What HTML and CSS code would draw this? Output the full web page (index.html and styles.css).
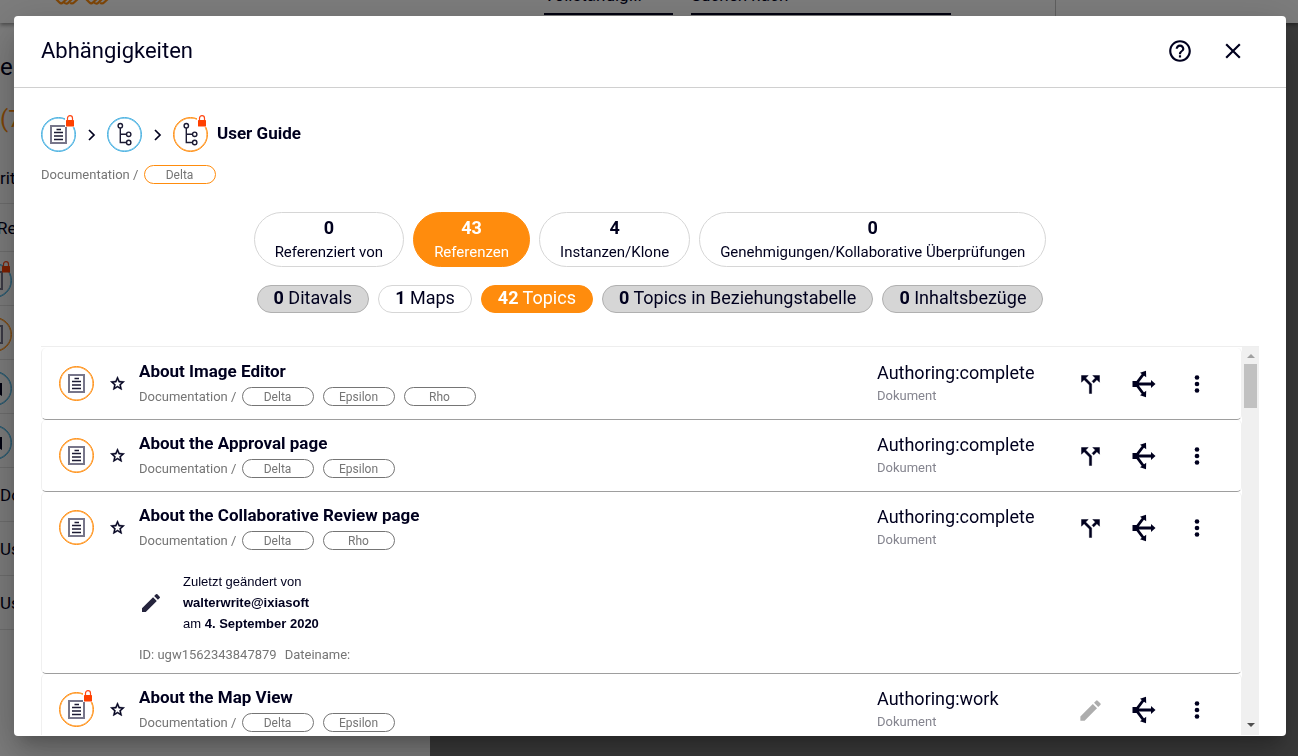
FILE: index.html
```
<!DOCTYPE html>
<html lang="de">
<head>
<meta charset="utf-8">
<title>Abhängigkeiten</title>
<link rel="stylesheet" href="styles.css">
</head>
<body>
<svg class="defs" aria-hidden="true">
  <symbol id="doc" viewBox="0 0 33 33">
    <path d="M9 8H24V25H9z" fill="none" stroke="#77768a" stroke-width="2"/>
    <path d="M14.500 11.500h4.500M12 14.500h9M12 18h9M12 21.500h9" fill="none" stroke="#1b1a33" stroke-width="1.400"/>
  </symbol>
  <symbol id="tree" viewBox="0 0 33 33">
    <g fill="none" stroke="#1b1a33" stroke-width="1.400">
      <circle cx="12.300" cy="7.700" r="2.200"/><circle cx="20.700" cy="16.300" r="2.200"/><circle cx="20.700" cy="24.500" r="2.200"/>
      <path d="M12.300 9.900V24.500H18.500M12.300 16.300H18.500"/>
    </g>
  </symbol>
  <symbol id="flag" viewBox="0 0 33 33"><path d="M11 11h13v13l-6.500-4-6.500 4z" fill="#00001e"/></symbol>
  <symbol id="lock" viewBox="0 0 10 12">
    <path d="M2.500 6V3.200a2.500 2.500 0 0 1 5 0V6" fill="none" stroke="#ff4713" stroke-width="1.200"/>
    <rect x="1" y="5" width="8" height="6.500" rx=".6" fill="#ff4000"/>
  </symbol>
  <symbol id="star" viewBox="0 0 24 24"><path fill="#00001e" stroke="#00001e" stroke-width=".6" d="M22 9.240l-7.190-.62L12 2 9.190 8.630 2 9.240l5.460 4.730L5.820 21 12 17.270 18.180 21l-1.630-7.030L22 9.240zM12 15.400l-3.760 2.270 1-4.280-3.320-2.880 4.380-.38L12 6.100l1.710 4.040 4.380.38-3.320 2.880 1 4.280L12 15.400z"/></symbol>
  <symbol id="split" viewBox="0 0 24 24"><path d="M14 4l2.290 2.290-2.880 2.880 1.420 1.420 2.880-2.880L20 10V4zM10 4H4v6l2.290-2.290 4.710 4.700V20h2v-8.410l-5.290-5.300z" stroke="#00001e" stroke-width=".4"/></symbol>
  <symbol id="fan" viewBox="0 0 26 28">
    <path d="M5 14L12.500 4M5 14h15M5 14l7.500 10" fill="none" stroke="#00001e" stroke-width="2.900"/>
    <path d="M1.500 11h5v6h-5zM20 10l4.500 4-4.500 4zM9 2.800l6-2 .2 6.400-2.400-1.700zM9 25.200l6 2 .2-6.400-2.400 1.700z"/>
  </symbol>
  <symbol id="dots" viewBox="0 0 24 24"><circle cx="12" cy="5.500" r="2.300"/><circle cx="12" cy="12" r="2.300"/><circle cx="12" cy="18.500" r="2.300"/></symbol>
  <symbol id="pencil" viewBox="0 0 24 24"><path d="M3 17.250V21h3.750L17.810 9.940l-3.750-3.750L3 17.250zM20.710 7.040a1 1 0 0 0 0-1.410l-2.340-2.340a1 1 0 0 0-1.410 0l-1.830 1.830 3.750 3.750 1.830-1.830z"/></symbol>
  <symbol id="help" viewBox="0 0 24 24"><path d="M11 18h2v-2h-2v2zm1-16C6.480 2 2 6.480 2 12s4.480 10 10 10 10-4.480 10-10S17.520 2 12 2zm0 18c-4.410 0-8-3.590-8-8s3.590-8 8-8 8 3.590 8 8-3.590 8-8 8zm0-14c-2.210 0-4 1.790-4 4h2c0-1.100.9-2 2-2s2 .9 2 2c0 2-3 1.750-3 5h2c0-2.250 3-2.500 3-5 0-2.210-1.790-4-4-4z"/></symbol>
  <symbol id="close" viewBox="0 0 24 24"><path d="M19 6.410L17.590 5 12 10.590 6.410 5 5 6.410 10.590 12 5 17.590 6.410 19 12 13.410 17.590 19 19 17.590 13.410 12z"/></symbol>
  <symbol id="chevron" viewBox="0 0 10 14"><path d="M2 2l5 5-5 5" fill="none" stroke="#00001e" stroke-width="1.700"/></symbol>
</svg>

<div class="page">
  <header class="topbar">
    <svg class="logo" viewBox="0 0 60 24" aria-hidden="true">
      <g fill="none" stroke="#ff8c0d" stroke-width="2.200">
        <path d="M0-3l5.500 5.500q1.700 1.700 3.400 0L15-3M10 2.500q2.500 2 4 .5L20-3M16 3q2.500 1 4-.5L26-3"/>
        <path d="M30-3l5.500 5.500q1.700 1.700 3.400 0L45-3M40 2.500q2.500 2 4 .5L50-3M46 3q2.500 1 4-.5L56-3"/>
      </g>
    </svg>
    <div class="field field-scope">Vollständig...</div>
    <div class="field field-search">Suchen nach</div>
    <div class="topbar-end"></div>
  </header>
  <div class="workspace">
    <aside class="results">
      <h1>e</h1>
      <div class="total">(7)</div>
      <div class="line line-head">rite</div>
      <div class="line line-short">Rev</div>
      <div class="line"><span class="badge blue"><svg><use href="#doc"/></svg><svg class="lock"><use href="#lock"/></svg></span></div>
      <div class="line"><span class="badge"><svg><use href="#doc"/></svg></span></div>
      <div class="line"><span class="badge blue"><svg><use href="#flag"/></svg></span></div>
      <div class="line"><span class="badge blue"><svg><use href="#flag"/></svg></span></div>
      <div class="line">Do</div>
      <div class="line">Us</div>
      <div class="line">Us</div>
    </aside>
    <div class="viewer"></div>
  </div>
</div>

<div class="overlay">
  <section class="dialog" role="dialog" aria-labelledby="title">
    <header class="dialog-head">
      <h2 id="title">Abhängigkeiten</h2>
      <button class="icon-btn" aria-label="Hilfe"><svg class="i26"><use href="#help"/></svg></button>
      <button class="icon-btn" aria-label="Schließen"><svg class="i26"><use href="#close"/></svg></button>
    </header>
    <div class="dialog-body">
      <nav class="trail">
        <span class="badge blue"><svg><use href="#doc"/></svg><svg class="lock"><use href="#lock"/></svg></span>
        <svg class="chevron"><use href="#chevron"/></svg>
        <span class="badge blue"><svg><use href="#tree"/></svg></span>
        <svg class="chevron"><use href="#chevron"/></svg>
        <span class="badge"><svg><use href="#tree"/></svg><svg class="lock"><use href="#lock"/></svg></span>
        <strong class="trail-name">User Guide</strong>
      </nav>
      <div class="path">Documentation / <span class="chip chip-active">Delta</span></div>

      <div class="tabs">
        <button class="tab"><b>0</b><span>Referenziert von</span></button>
        <button class="tab on"><b>43</b><span>Referenzen</span></button>
        <button class="tab"><b>4</b><span>Instanzen/Klone</span></button>
        <button class="tab"><b>0</b><span>Genehmigungen/Kollaborative Überprüfungen</span></button>
      </div>
      <div class="filters">
        <button class="filter off"><b>0</b> Ditavals</button>
        <button class="filter"><b>1</b> Maps</button>
        <button class="filter on"><b>42</b> Topics</button>
        <button class="filter off"><b>0</b> Topics in Beziehungstabelle</button>
        <button class="filter off"><b>0</b> Inhaltsbezüge</button>
      </div>

      <div class="scroller">
        <div class="list">
          <article class="card">
            <span class="badge"><svg><use href="#doc"/></svg></span>
            <button class="icon-btn star" aria-label="Favorit"><svg><use href="#star"/></svg></button>
            <div class="info">
              <h3>About Image Editor</h3>
              <div class="path">Documentation / <span class="chip">Delta</span><span class="chip">Epsilon</span><span class="chip">Rho</span></div>
            </div>
            <div class="state"><div class="status">Authoring:complete</div><div class="kind">Dokument</div></div>
            <div class="actions">
              <button class="icon-btn" aria-label="Verzweigen"><svg class="i27"><use href="#split"/></svg></button>
              <button class="icon-btn" aria-label="Abhängigkeiten"><svg class="fan"><use href="#fan"/></svg></button>
              <button class="icon-btn" aria-label="Mehr"><svg><use href="#dots"/></svg></button>
            </div>
          </article>
          <article class="card">
            <span class="badge"><svg><use href="#doc"/></svg></span>
            <button class="icon-btn star" aria-label="Favorit"><svg><use href="#star"/></svg></button>
            <div class="info">
              <h3>About the Approval page</h3>
              <div class="path">Documentation / <span class="chip">Delta</span><span class="chip">Epsilon</span></div>
            </div>
            <div class="state"><div class="status">Authoring:complete</div><div class="kind">Dokument</div></div>
            <div class="actions">
              <button class="icon-btn" aria-label="Verzweigen"><svg class="i27"><use href="#split"/></svg></button>
              <button class="icon-btn" aria-label="Abhängigkeiten"><svg class="fan"><use href="#fan"/></svg></button>
              <button class="icon-btn" aria-label="Mehr"><svg><use href="#dots"/></svg></button>
            </div>
          </article>
          <article class="card">
            <span class="badge"><svg><use href="#doc"/></svg></span>
            <button class="icon-btn star" aria-label="Favorit"><svg><use href="#star"/></svg></button>
            <div class="info">
              <h3>About the Collaborative Review page</h3>
              <div class="path">Documentation / <span class="chip">Delta</span><span class="chip">Rho</span></div>
              <div class="change">
                <svg><use href="#pencil"/></svg>
                <p>Zuletzt geändert von<br><b>walterwrite@ixiasoft</b><br>am <b>4. September 2020</b></p>
              </div>
              <div class="meta"><span>ID: ugw1562343847879</span><span>Dateiname:</span></div>
            </div>
            <div class="state"><div class="status">Authoring:complete</div><div class="kind">Dokument</div></div>
            <div class="actions">
              <button class="icon-btn" aria-label="Verzweigen"><svg class="i27"><use href="#split"/></svg></button>
              <button class="icon-btn" aria-label="Abhängigkeiten"><svg class="fan"><use href="#fan"/></svg></button>
              <button class="icon-btn" aria-label="Mehr"><svg><use href="#dots"/></svg></button>
            </div>
          </article>
          <article class="card">
            <span class="badge"><svg><use href="#doc"/></svg><svg class="lock"><use href="#lock"/></svg></span>
            <button class="icon-btn star" aria-label="Favorit"><svg><use href="#star"/></svg></button>
            <div class="info">
              <h3>About the Map View</h3>
              <div class="path">Documentation / <span class="chip">Delta</span><span class="chip">Epsilon</span></div>
            </div>
            <div class="state"><div class="status">Authoring:work</div><div class="kind">Dokument</div></div>
            <div class="actions">
              <button class="icon-btn" aria-label="Bearbeiten" disabled><svg class="i27"><use href="#pencil"/></svg></button>
              <button class="icon-btn" aria-label="Abhängigkeiten"><svg class="fan"><use href="#fan"/></svg></button>
              <button class="icon-btn" aria-label="Mehr"><svg><use href="#dots"/></svg></button>
            </div>
          </article>
        </div>
        <div class="scrollbar" aria-hidden="true">
          <span class="arrow up"></span><span class="thumb"></span><span class="arrow down"></span>
        </div>
      </div>
    </div>
  </section>
</div>
</body>
</html>
```

FILE: styles.css
```
* { box-sizing: border-box; }
body {
  margin: 0;
  height: 100vh;
  overflow: hidden;
  font-family: Roboto, "Liberation Sans", sans-serif;
  color: #00001e;
}
h1, h2, h3, p { margin: 0; font-weight: 400; }
button { font: inherit; color: inherit; cursor: pointer; }
svg { display: block; }
.defs { position: absolute; width: 0; height: 0; }

/* Page behind the dialog */
.page { display: flex; flex-direction: column; height: 100vh; }
.topbar {
  display: flex;
  height: 23px;
  background: #fafafa;
  box-shadow: 0 2px 4px rgba(0, 0, 0, .4);
  z-index: 1;
}
.logo { width: 60px; height: 24px; margin-left: 54px; }
.field {
  height: 15px;
  border-bottom: 2px solid #00001e;
  font-size: 17px;
  line-height: 20px;
  overflow: hidden;
  display: flex;
  align-items: flex-end;
  padding-bottom: 8px;
}
.field-scope { width: 129px; margin-left: 430px; }
.field-search { width: 260px; margin-left: 18px; }
.topbar-end { width: 105px; border-right: 1px solid #c0c0c0; }
.workspace { display: flex; flex: 1; min-height: 0; }
.results { width: 430px; background: #fafafa; overflow: hidden; padding-top: 28px; }
.results h1 { font-size: 24px; line-height: 32px; }
.results .total { font-size: 24px; line-height: 32px; color: #ff8c0d; margin-top: 20px; }
.line { display: flex; align-items: center; height: 54px; font-size: 17px; border-bottom: 1px solid #ddd; }
.line-head { height: 69px; padding-top: 18px; }
.line-short { height: 48px; text-indent: -3px; }
.line .badge { margin: 4px 0 0 -23px; }
.viewer { flex: 1; background: #757575; }

/* Dialog */
.overlay {
  position: fixed;
  inset: 0;
  z-index: 2;
  display: flex;
  padding: 16px 12px 20px 14px;
  background: rgba(0, 0, 0, .5);
}
.dialog {
  flex: 1;
  min-width: 0;
  display: flex;
  flex-direction: column;
  background: #fff;
  border-radius: 4px;
  box-shadow: 0 11px 15px -7px rgba(0, 0, 0, .2), 0 24px 38px 3px rgba(0, 0, 0, .14), 0 9px 46px 8px rgba(0, 0, 0, .12);
}
.dialog-head {
  display: flex;
  align-items: center;
  gap: 27px;
  height: 72px;
  padding: 0 40px 1px 27px;
  border-bottom: 1px solid #d0d0d0;
}
.dialog-head h2 { flex: 1; font-size: 22px; line-height: 28px; padding-bottom: 1px; }
.icon-btn { display: flex; align-items: center; justify-content: center; padding: 0; border: 0; background: none; fill: #00001e; }
.icon-btn svg { width: 24px; height: 24px; }
.icon-btn svg.i26 { width: 26px; height: 26px; }
.icon-btn svg.i27 { width: 27px; height: 27px; }
.icon-btn svg.fan { width: 26px; height: 28px; }
.icon-btn:disabled { fill: #adadad; }
.dialog-body { flex: 1; min-height: 0; display: flex; flex-direction: column; padding: 29px 27px 1px; }

.badge { position: relative; flex: none; width: 35px; height: 35px; border: 1px solid #ff8c0d; border-radius: 50%; box-shadow: inset 0 0 0 .5px #ff8c0d; }
.badge.blue { border-color: #42aee0; box-shadow: inset 0 0 0 .5px #42aee0; }
.badge svg { width: 33px; height: 33px; }
.badge .lock { position: absolute; top: -3px; right: 0; width: 10px; height: 12px; background: #fff; }
.line .lock { background: none; }

.trail { display: flex; align-items: center; }
.chevron { width: 10px; height: 14px; margin: 0 10px 0 11px; }
.trail-name { margin-left: 9px; padding-bottom: 3px; font-size: 17px; font-weight: 700; }
.path { display: flex; align-items: center; gap: 9px; font-size: 13px; line-height: 19px; color: #757575; white-space: pre; }
.dialog-body > .path { margin-top: 13px; }
.chip { width: 72px; height: 19px; border: 1px solid #757575; border-radius: 10px; font-size: 12px; line-height: 18px; text-align: center; }
.path .chip:first-child { margin-left: -7px; }
.chip-active { border-color: #ff8c0d; }

.tabs { display: flex; justify-content: center; gap: 9px; margin-top: 28px; }
.tab { height: 55px; padding: 2px 20px 0; display: flex; flex-direction: column; align-items: center; justify-content: flex-start; background: #fff; border: 1px solid #d6d6d6; border-radius: 28px; font-size: 15px; line-height: 25px; white-space: nowrap; }
.tab b { font-size: 18px; font-weight: 700; }
.filters { display: flex; justify-content: center; gap: 9px; margin-top: 18px; }
.filter { height: 28px; padding: 0 16px 2px; background: #fff; border: 1px solid #d6d6d6; border-radius: 14px; font-size: 18px; line-height: 24px; white-space: nowrap; }
.filter b { font-weight: 700; }
.filter.off { background: #d6d6d6; border-color: #b0b0b0; }
.tab.on, .filter.on { background: #ff8c0d; border-color: #ff8c0d; color: #fff; }

.scroller { flex: 1; min-height: 0; display: flex; margin-top: 33px; border-top: 1px solid #eee; }
.list { flex: 1; overflow: hidden; padding-top: 1px; }
.card { display: flex; align-items: flex-start; padding: 18px 31px 0 17px; min-height: 72px; border: 1px solid #f0f0f0; border-top: 0; border-bottom-color: #9e9e9e; border-radius: 5px; }
.star { width: 24px; height: 35px; margin-left: 11px; }
.icon-btn.star svg { width: 17px; height: 17px; }
.info { flex: 1; margin: -6px 0 0 10px; }
.info h3 { font-size: 17px; line-height: 22px; font-weight: 700; }
.info .path { margin-top: 5px; }
.state { width: 180px; margin-top: -5px; }
.status { font-size: 18px; line-height: 24px; }
.kind { font-size: 13px; line-height: 22px; color: #85858f; }
.actions { display: flex; gap: 26px; margin-left: 20px; height: 36px; align-items: center; }
.actions .icon-btn { width: 27px; }
.change { display: flex; align-items: center; gap: 20px; margin-top: 21px; font-family: "Liberation Sans", Arial, sans-serif; font-size: 13px; line-height: 21px; }
.change svg { width: 24px; height: 24px; fill: #25243d; }
.meta { display: flex; gap: 8px; margin: 11px 0 8px; font-size: 13px; line-height: 20px; color: #757575; }

.scrollbar { width: 17px; display: flex; flex-direction: column; align-items: center; background: #f0f0f0; }
.arrow { width: 0; height: 0; border: 4px solid transparent; }
.up { margin: 3px 0 6px; border-bottom-color: #a0a0a0; }
.thumb { width: 13px; height: 44px; background: #c1c1c1; }
.down { margin: auto 0 4px; border-top-color: #505050; }
```
